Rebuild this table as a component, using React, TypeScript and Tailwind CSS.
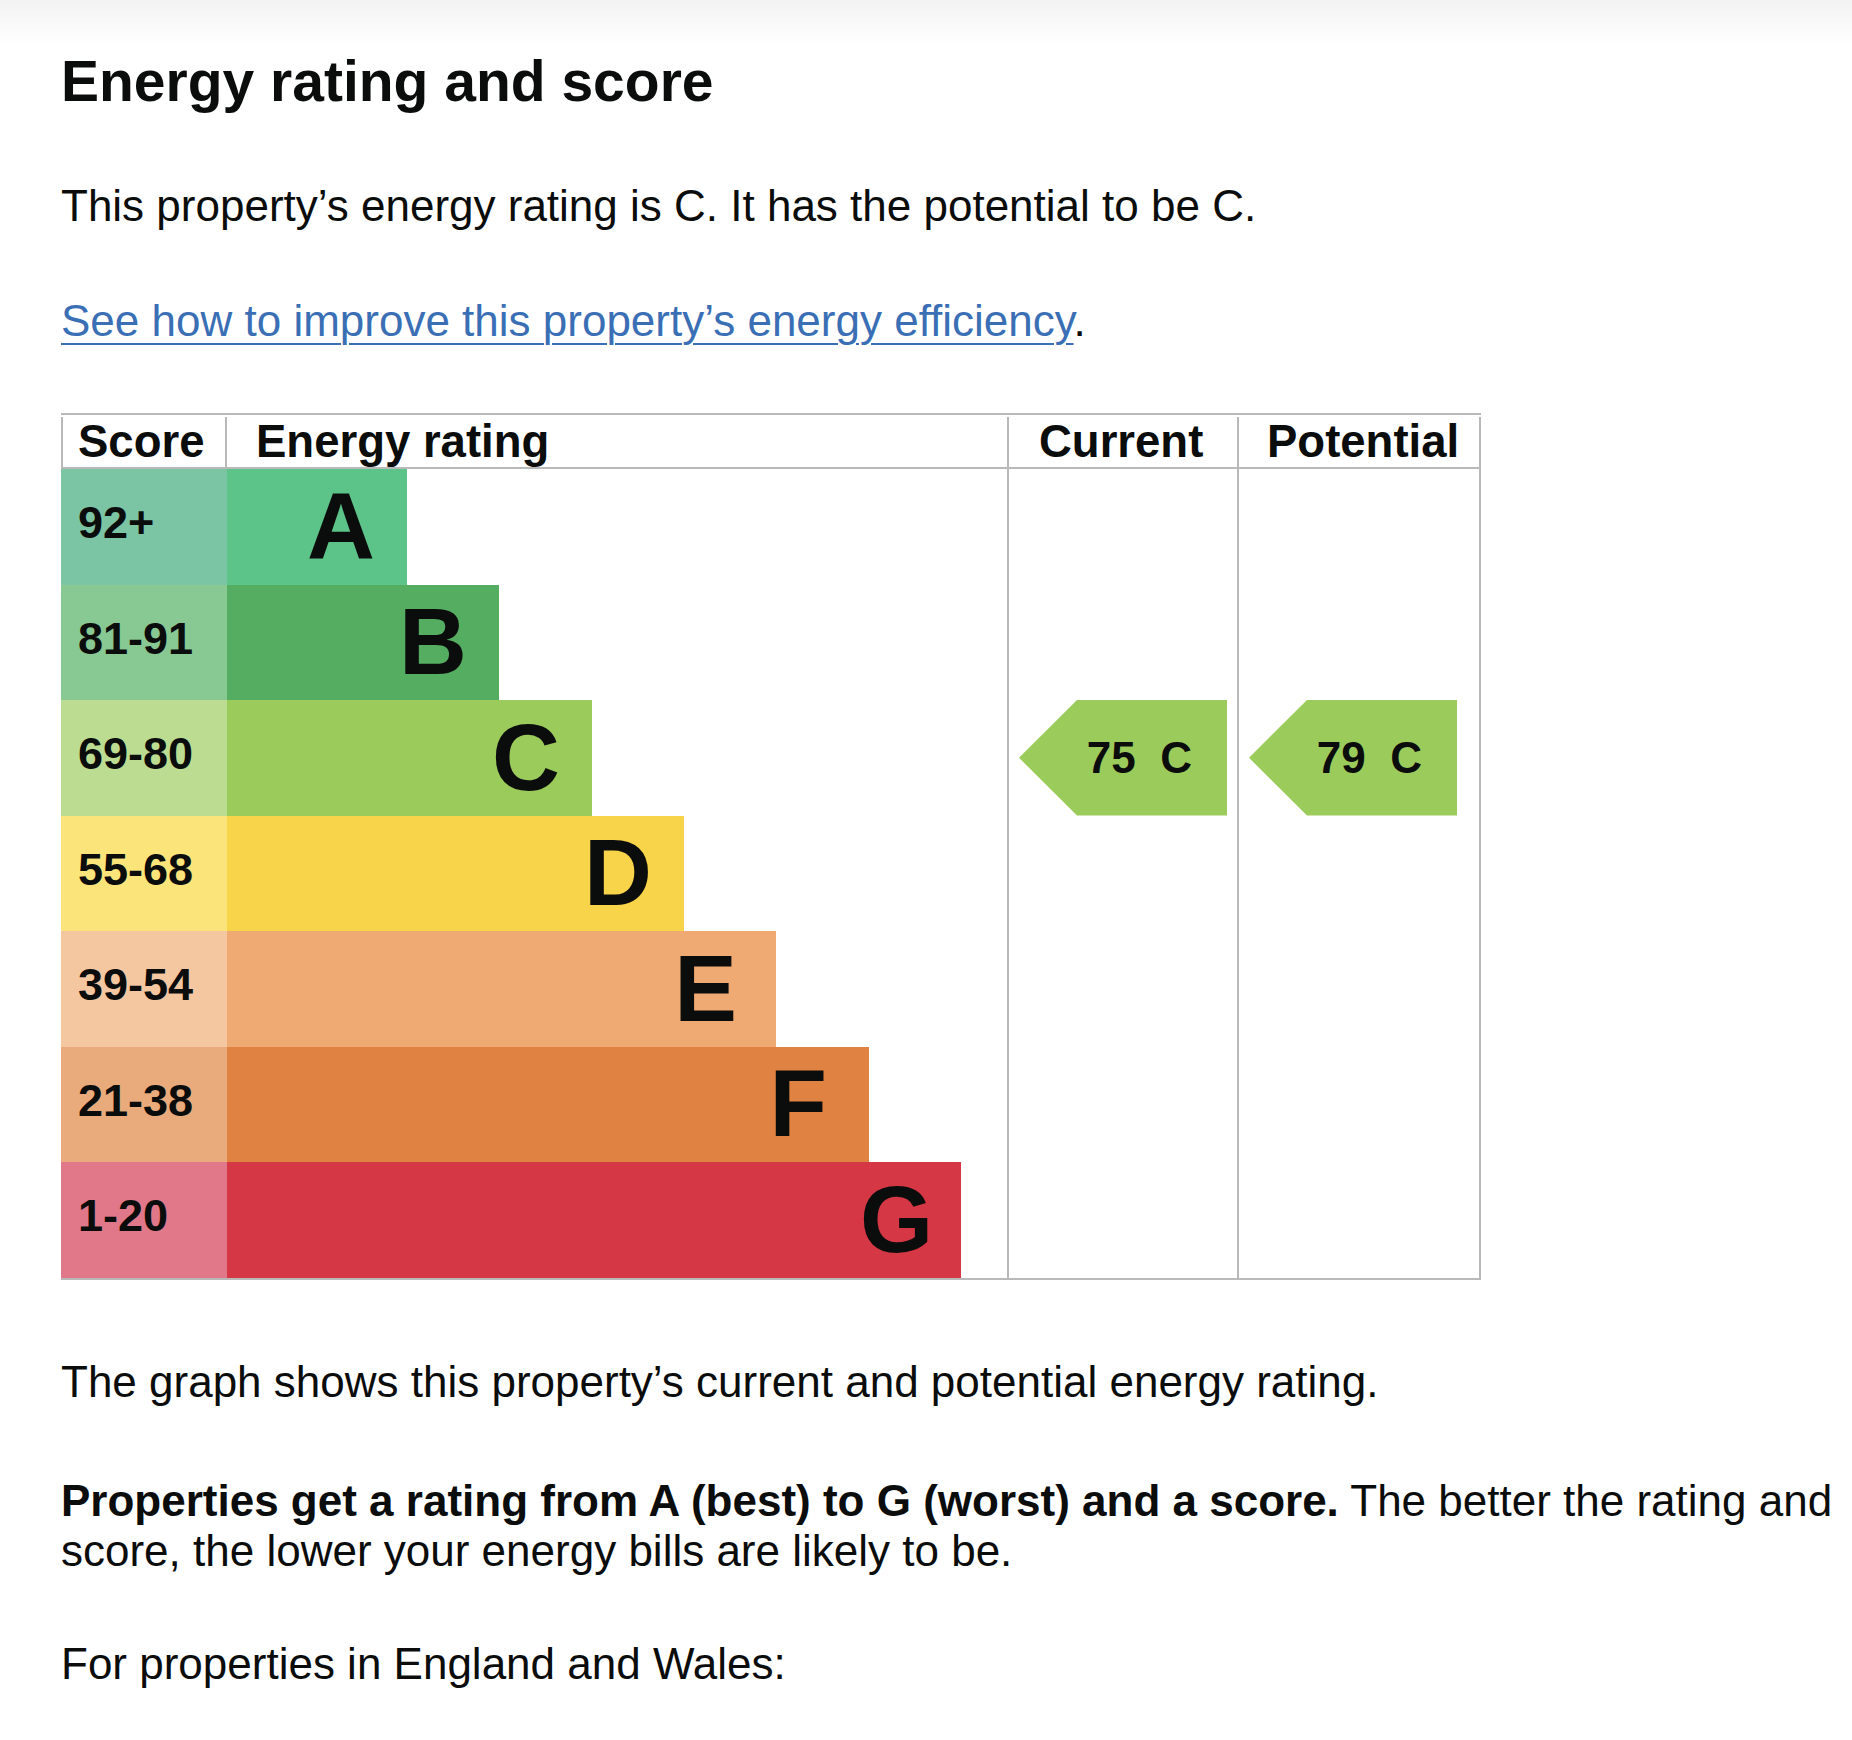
const bands = [
  { score: "92+", letter: "A", scoreBg: "bg-[#7bc4a4]", barBg: "bg-[#5cc389]", width: "w-[180px]", pr: "pr-[32px]" },
  { score: "81-91", letter: "B", scoreBg: "bg-[#88c892]", barBg: "bg-[#55ad62]", width: "w-[272px]", pr: "pr-[32px]" },
  { score: "69-80", letter: "C", scoreBg: "bg-[#bcdd91]", barBg: "bg-[#9bcb5b]", width: "w-[365px]", pr: "pr-[32px]" },
  { score: "55-68", letter: "D", scoreBg: "bg-[#fbe47a]", barBg: "bg-[#f8d44a]", width: "w-[457px]", pr: "pr-[32px]" },
  { score: "39-54", letter: "E", scoreBg: "bg-[#f4c7a1]", barBg: "bg-[#efaa73]", width: "w-[549px]", pr: "pr-[39px]" },
  { score: "21-38", letter: "F", scoreBg: "bg-[#e9ab7b]", barBg: "bg-[#e08342]", width: "w-[642px]", pr: "pr-[42px]" },
  { score: "1-20", letter: "G", scoreBg: "bg-[#e07889]", barBg: "bg-[#d63745]", width: "w-[734px]", pr: "pr-[28px]" },
];

// row index of the band shown in the arrows (C)
const currentBand = 2;
const potentialBand = 2;

function Arrow({ label }: { label: string }) {
  return (
    <div className="ml-[10px] flex h-full w-[208px] items-center justify-end bg-[#9bcb5b] pr-[35px] [clip-path:polygon(0_50%,58px_0,100%_0,100%_100%,58px_100%)]">
      <span className="whitespace-pre text-[44px] font-bold leading-none text-[#0b0c0c]">{label}</span>
    </div>
  );
}

function RatingTable() {
  return (
    <div className="mt-[68px] w-[1420px]">
      {/* header */}
      <div className="grid h-[56px] grid-cols-[166px_782px_230px_242px] border-y-2 border-[#b9b9b9] pt-[2px] text-[45.5px] font-bold leading-none">
        <div className="flex items-center border-x-2 border-[#b9b9b9] pl-[15px]">Score</div>
        <div className="flex items-center border-r-2 border-[#b9b9b9] pl-[29px]">Energy rating</div>
        <div className="flex items-center border-r-2 border-[#b9b9b9] pl-[30px]">Current</div>
        <div className="flex items-center border-r-2 border-[#b9b9b9] pl-[28px]">Potential</div>
      </div>

      {/* body */}
      <div className="grid grid-cols-[166px_782px_230px_242px] border-b-2 border-[#b9b9b9]">
        <div className="flex flex-col">
          {bands.map((b) => (
            <div
              key={b.score}
              className={`flex h-[115.5px] items-center pb-[8px] pl-[17px] text-[45px] font-bold leading-none ${b.scoreBg}`}
            >
              {b.score}
            </div>
          ))}
        </div>
        <div className="flex flex-col border-r-2 border-[#b9b9b9]">
          {bands.map((b) => (
            <div key={b.letter} className="h-[115.5px]">
              <div
                className={`flex h-full items-center justify-end text-[94px] font-bold leading-none ${b.pr} ${b.width} ${b.barBg}`}
              >
                {b.letter}
              </div>
            </div>
          ))}
        </div>
        <div className="flex flex-col border-r-2 border-[#b9b9b9]">
          {bands.map((b, i) => (
            <div key={b.letter} className="h-[115.5px]">
              {i === currentBand && <Arrow label={"75  C"} />}
            </div>
          ))}
        </div>
        <div className="flex flex-col border-r-2 border-[#b9b9b9]">
          {bands.map((b, i) => (
            <div key={b.letter} className="h-[115.5px]">
              {i === potentialBand && <Arrow label={"79  C"} />}
            </div>
          ))}
        </div>
      </div>
    </div>
  );
}

export default function App() {
  return (
    <div className="min-h-screen bg-[linear-gradient(to_bottom,#f2f2f2_0px,#ffffff_45px)] pb-[40px] pl-[61px] pr-[8px] pt-[53px] font-['Liberation_Sans',Arial,sans-serif] text-[#0b0c0c]">
      <h2 className="text-[57px] font-bold leading-none">Energy rating and score</h2>

      <p className="mt-[72px] text-[44px] leading-[48.5px]">
        This property’s energy rating is C. It has the potential to be C.
      </p>

      <p className="mt-[66px] text-[44px] leading-[48.5px]">
        <a
          href="#"
          className="text-[#3a6fb5] underline decoration-[2px] underline-offset-[7px]"
        >
          See how to improve this property’s energy efficiency
        </a>
        .
      </p>

      <RatingTable />

      <p className="mt-[78px] text-[44px] leading-[48.5px]">
        The graph shows this property’s current and potential energy rating.
      </p>

      <p className="mt-[70px] text-[44px] leading-[49.5px]">
        <strong className="font-bold">
          Properties get a rating from A (best) to G (worst) and a score.
        </strong>{" "}
        The better the rating and score, the lower your energy bills are likely to be.
      </p>

      <p className="mt-[65px] text-[44px] leading-[48.5px]">For properties in England and Wales:</p>
    </div>
  );
}
